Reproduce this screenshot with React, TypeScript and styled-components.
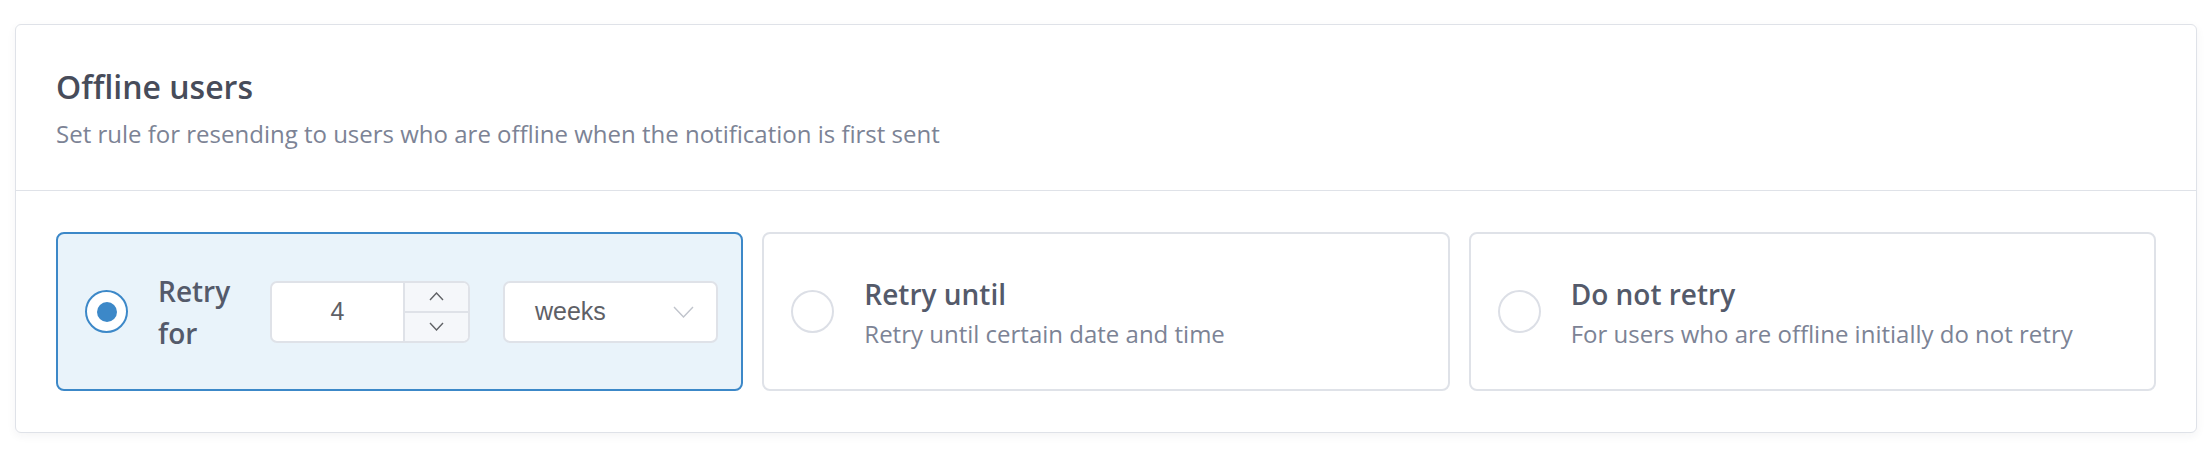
import React, { useState } from 'react';
import styled, { createGlobalStyle } from 'styled-components';

const GlobalStyle = createGlobalStyle`
  html, body {
    margin: 0;
    padding: 0;
    background: #ffffff;
  }
  body {
    font-family: "Open Sans", "Noto Sans", sans-serif;
  }
  * {
    box-sizing: border-box;
  }
`;

const Page = styled.div`
  padding: 24px 15px;
`;

const Card = styled.section`
  background: #ffffff;
  border: 1px solid #dfe2e8;
  border-radius: 6px;
  box-shadow: 0 3px 10px rgba(30, 40, 60, 0.05);
`;

const CardHeader = styled.header`
  padding: 39px 40px 40px;
  border-bottom: 1px solid #dfe2e8;
`;

const Title = styled.h2`
  margin: 0;
  font-size: 32px;
  line-height: 45px;
  font-weight: 600;
  color: #474c5a;
`;

const Subtitle = styled.p`
  margin: 8px 0 0;
  font-size: 24px;
  line-height: 33px;
  font-weight: 400;
  color: #7c8395;
`;

const CardBody = styled.div`
  padding: 41px 40px;
  display: grid;
  grid-template-columns: repeat(3, minmax(0, 1fr));
  gap: 19px;
`;

const Option = styled.label<{ $active?: boolean }>`
  height: 159px;
  display: flex;
  align-items: center;
  padding: 0 20px 0 27px;
  border: ${(p) => (p.$active ? '2px solid #3c88c8' : '2px solid #dfe2e8')};
  border-radius: 8px;
  background: ${(p) => (p.$active ? '#e9f3fa' : '#ffffff')};
  cursor: pointer;
`;

const Radio = styled.span<{ $checked?: boolean }>`
  flex: none;
  width: 43px;
  height: 43px;
  border-radius: 50%;
  border: 2px solid ${(p) => (p.$checked ? '#3c88c8' : '#dcdfe6')};
  background: #ffffff;
  display: flex;
  align-items: center;
  justify-content: center;
  margin-right: 30px;

  &::after {
    content: '';
    width: 20px;
    height: 20px;
    border-radius: 50%;
    background: #3c88c8;
    display: ${(p) => (p.$checked ? 'block' : 'none')};
  }
`;

const OptionText = styled.div`
  display: flex;
  flex-direction: column;
`;

const OptionTitle = styled.span`
  font-size: 28px;
  line-height: 40px;
  font-weight: 600;
  color: #545a6a;
`;

const OptionDesc = styled.span`
  margin-top: 3px;
  font-size: 24px;
  line-height: 33px;
  color: #7c8395;
`;

const RetryLabel = styled.span`
  flex: none;
  width: 82px;
  margin-right: 30px;
  font-size: 28px;
  line-height: 42px;
  font-weight: 600;
  color: #545a6a;
`;

const NumberBox = styled.div`
  flex: none;
  display: flex;
  width: 200px;
  height: 62px;
  border: 2px solid #dfe2e8;
  border-radius: 7px;
  background: #ffffff;
  overflow: hidden;
  margin-right: 33px;
`;

const NumberValue = styled.div`
  flex: 1;
  display: flex;
  align-items: center;
  justify-content: center;
  font-family: "Liberation Sans", Arial, sans-serif;
  font-size: 25px;
  color: #5e6066;
`;

const Spinner = styled.div`
  width: 65px;
  display: flex;
  flex-direction: column;
  border-left: 2px solid #dfe2e8;
  background: #f5f7fa;
`;

const SpinButton = styled.div<{ $top?: boolean }>`
  flex: 1;
  display: flex;
  align-items: center;
  justify-content: center;
  border-bottom: ${(p) => (p.$top ? '2px solid #dfe2e8' : 'none')};
  color: #606266;
`;

const Select = styled.div`
  flex: none;
  width: 215px;
  height: 62px;
  display: flex;
  align-items: center;
  justify-content: space-between;
  padding: 0 22px 0 30px;
  border: 2px solid #dfe2e8;
  border-radius: 7px;
  background: #ffffff;
  font-family: "Liberation Sans", Arial, sans-serif;
  font-size: 25px;
  color: #5e6066;
`;

const Chevron = ({ up, w, h, color }: { up?: boolean; w: number; h: number; color: string }) => (
  <svg width={w} height={h} viewBox={`0 0 ${w} ${h}`} fill="none">
    <path
      d={up ? `M1 ${h - 1} L${w / 2} 1 L${w - 1} ${h - 1}` : `M1 1 L${w / 2} ${h - 1} L${w - 1} 1`}
      stroke={color}
      strokeWidth={1.4}
    />
  </svg>
);

type Choice = 'for' | 'until' | 'never';

const App: React.FC = () => {
  const [choice, setChoice] = useState<Choice>('for');

  return (
    <Page>
      <GlobalStyle />
      <Card>
        <CardHeader>
          <Title>Offline users</Title>
          <Subtitle>Set rule for resending to users who are offline when the notification is first sent</Subtitle>
        </CardHeader>
        <CardBody>
          <Option $active={choice === 'for'} onClick={() => setChoice('for')}>
            <Radio $checked={choice === 'for'} />
            <RetryLabel>Retry for</RetryLabel>
            <NumberBox>
              <NumberValue>4</NumberValue>
              <Spinner>
                <SpinButton $top>
                  <Chevron up w={15} h={9} color="#606266" />
                </SpinButton>
                <SpinButton>
                  <Chevron w={15} h={9} color="#606266" />
                </SpinButton>
              </Spinner>
            </NumberBox>
            <Select>
              weeks
              <Chevron w={21} h={12} color="#c0c4cc" />
            </Select>
          </Option>
          <Option $active={choice === 'until'} onClick={() => setChoice('until')}>
            <Radio $checked={choice === 'until'} />
            <OptionText>
              <OptionTitle>Retry until</OptionTitle>
              <OptionDesc>Retry until certain date and time</OptionDesc>
            </OptionText>
          </Option>
          <Option $active={choice === 'never'} onClick={() => setChoice('never')}>
            <Radio $checked={choice === 'never'} />
            <OptionText>
              <OptionTitle>Do not retry</OptionTitle>
              <OptionDesc>For users who are offline initially do not retry</OptionDesc>
            </OptionText>
          </Option>
        </CardBody>
      </Card>
    </Page>
  );
};

export default App;
